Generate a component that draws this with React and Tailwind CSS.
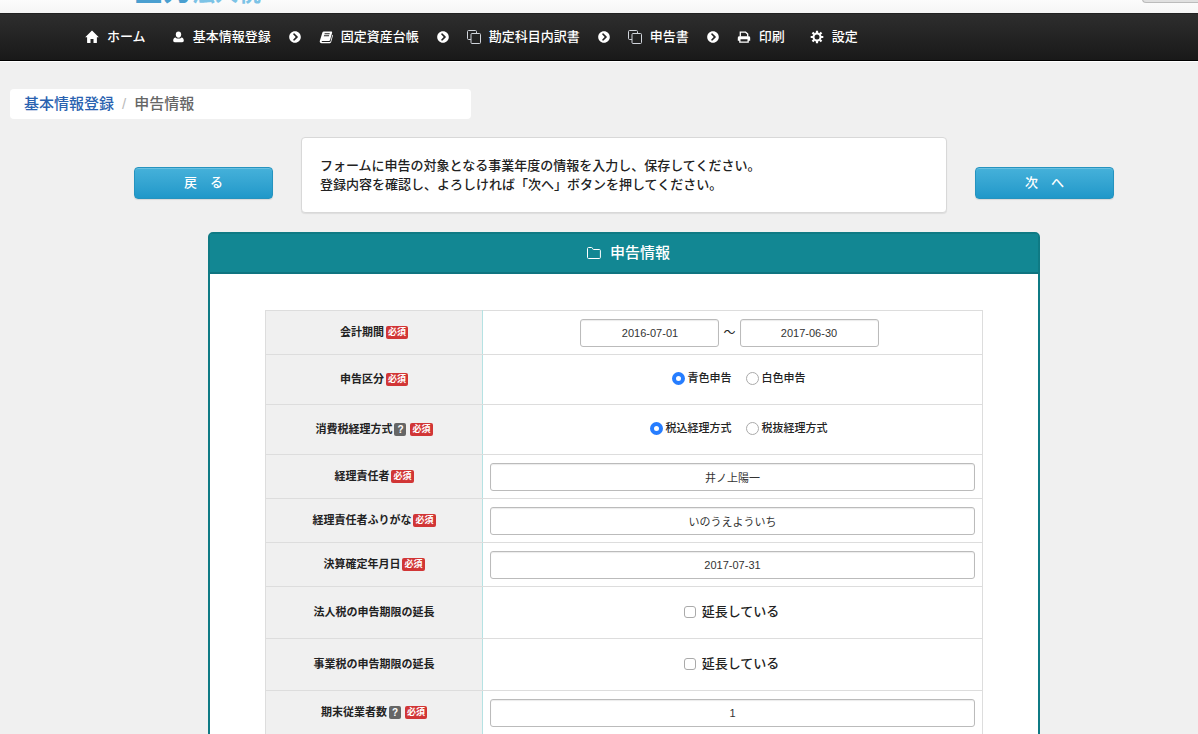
import { useState } from 'react'
import { FaChevronCircleRight } from 'react-icons/fa'

function HomeIcon() {
  return (
    <svg viewBox="0 0 14 14" className="w-[14px] h-[14px]" fill="currentColor">
      <path d="M7 .5l6.800 6.800h-1.900v5.200c0 .4-.2.6-.6.6H8.500V9.100h-3v4H2.700c-.4 0-.6-.2-.6-.6V7.300H.2z" />
    </svg>
  )
}

function UserIcon() {
  return (
    <svg viewBox="0 0 14 14" className="w-[14px] h-[14px]" fill="currentColor">
      <ellipse cx="7.5" cy="4.600" rx="2.700" ry="3.100" />
      <path d="M4.600 7.400C5.900 9 9.100 9 10.400 7.400c1.700.2 2.400 1.400 2.400 3.200 0 1.200-.6 1.700-1.600 1.700H3.800c-1 0-1.600-.5-1.600-1.700 0-1.800.7-3 2.400-3.200z" />
    </svg>
  )
}

function BookIcon() {
  return (
    <svg viewBox="0 0 14 14" className="w-[14px] h-[14px]" fill="currentColor">
      <path
        fillRule="evenodd"
        d="M4.900 1.400h7.300c.8 0 1.100.6.9 1.300l-2 7.300c-.2.6-.6.9-1.200.9H3.200c-.8 0-.8 1 0 1h7.500c.5 0 .8-.2.9-.6l1.700-6.500c.6.3.7.7.5 1.300l-1.600 6c-.2.7-.7 1.100-1.400 1.100H2.600c-1.300 0-2.200-1-1.800-2.200l2.600-8.500c.2-.7.7-1.100 1.500-1.100zM5.700 3.200l-.3 1h5.100l.3-1zM5.100 5.300l-.3 1h5.100l.3-1z"
      />
    </svg>
  )
}

function CopyIcon() {
  return (
    <svg viewBox="0 0 14 14" className="w-[14px] h-[14px] text-gray-300" fill="none" stroke="currentColor" strokeWidth="1">
      <path d="M4 9.500H1.500c-.6 0-1-.4-1-1v-7c0-.6.4-1 1-1h7c.6 0 1 .4 1 1V3.500" />
      <rect x="4" y="3.500" width="9.500" height="10" rx="1" />
    </svg>
  )
}

function PrintIcon() {
  return (
    <svg viewBox="0 0 14 14" className="w-[14px] h-[14px]">
      <path d="M3.300 6.800V2.200h5.300l2.100 1.900v2.700" fill="none" stroke="currentColor" strokeWidth="1.300" />
      <path
        fill="currentColor"
        fillRule="evenodd"
        d="M2.300 6.300h9.400c.9 0 1.500.6 1.500 1.500v3h-1.400v1.900H2.200v-1.900H.8v-3c0-.9.6-1.500 1.500-1.500zM3.500 9.200v2.300h7V9.200z"
      />
    </svg>
  )
}

function GearIcon() {
  return (
    <svg viewBox="0 0 14 14" className="w-[14px] h-[14px]" fill="none" stroke="currentColor">
      <circle cx="7" cy="7" r="3.500" strokeWidth="2" />
      <path
        strokeWidth="2.200"
        d="M7 .7v2.300M7 11v2.300M.7 7H3M11 7h2.300M2.500 2.500l1.600 1.600M9.900 9.900l1.600 1.600M2.500 11.500l1.600-1.600M9.900 4.100l1.600-1.600"
      />
    </svg>
  )
}

function FolderIcon() {
  return (
    <svg viewBox="0 0 16 14" className="w-4 h-[14px]" fill="none" stroke="currentColor" strokeWidth="1">
      <path d="M1.500 11.500V2.500c0-.6.400-1 1-1h3c.5 0 .9.300 1 .8.100.7.400 1.200 1 1.200h5.900c.6 0 1 .4 1 1v7c0 .6-.4 1-1 1H2.500c-.6 0-1-.4-1-1z" />
    </svg>
  )
}

const navItems = [
  { label: 'ホーム', icon: <HomeIcon /> },
  { label: '基本情報登録', icon: <UserIcon />, arrow: true },
  { label: '固定資産台帳', icon: <BookIcon />, arrow: true },
  { label: '勘定科目内訳書', icon: <CopyIcon />, arrow: true },
  { label: '申告書', icon: <CopyIcon />, arrow: true },
  { label: '印刷', icon: <PrintIcon /> },
  { label: '設定', icon: <GearIcon /> },
]

const inputClass =
  'h-7 px-2 bg-white border border-[#bbb] rounded-[3px] text-center text-[11px] text-[#333] shadow-[inset_0_1px_1px_rgba(0,0,0,0.08)]'

function ActionButton({ children }) {
  return (
    <button
      type="button"
      className="w-[139px] h-8 mb-[14px] shrink-0 rounded-[4px] border border-[#2593bf] bg-gradient-to-b from-[#45b1da] to-[#1f98c9] text-white text-[13px] font-medium whitespace-pre shadow-[inset_0_1px_0_rgba(255,255,255,0.2),0_1px_1px_rgba(0,0,0,0.1)]"
    >
      {children}
    </button>
  )
}

function Row({ label, htmlFor, help, required, height, children }) {
  return (
    <tr className={height}>
      <th scope="row" className="w-[217px] bg-[#f0f0f0] border border-[#ddd] border-r-[#b5e2e3] text-[11px] font-bold">
        <div className="flex items-center justify-center">
          <label htmlFor={htmlFor}>{label}</label>
          {help && (
            <span className="mx-0.5 w-3 h-[13px] rounded-[2px] bg-[#666] text-white text-[10px] leading-[13px]">?</span>
          )}
          {required && (
            <span className="ml-0.5 px-0.5 h-[13px] rounded-[2px] bg-[#d13636] text-white text-[9px] leading-[13px]">必須</span>
          )}
        </div>
      </th>
      <td className="border border-[#ddd] px-[7px]">{children}</td>
    </tr>
  )
}

function RadioGroup({ name, options, value, onChange }) {
  return (
    <div className="flex items-center justify-center gap-[14px] pl-3 pb-0.5">
      {options.map((option) => (
        <label key={option} className="flex items-center gap-[3px] text-[11px] font-medium">
          <input
            type="radio"
            name={name}
            checked={value === option}
            onChange={() => onChange(option)}
            className="appearance-none w-[13px] h-[13px] rounded-full bg-white border border-[#aaa] checked:border-4 checked:border-[#267dff]"
          />
          {option}
        </label>
      ))}
    </div>
  )
}

function ExtendCheckbox({ id }) {
  return (
    <div className="flex items-center justify-center gap-1.5 pr-0.5 pb-0.5 text-[13px] font-medium">
      <input
        id={id}
        type="checkbox"
        className="appearance-none w-3 h-3 rounded-[3px] bg-white border border-[#aaa] checked:bg-[#267dff]"
      />
      <label htmlFor={id}>延長している</label>
    </div>
  )
}

export default function App() {
  const [shinkoku, setShinkoku] = useState('青色申告')
  const [keiri, setKeiri] = useState('税込経理方式')

  return (
    <div className="min-h-screen bg-[#f0f0f0] text-[#222] font-['Liberation_Sans','Noto_Sans_CJK_JP',sans-serif]">
      <header className="h-[13px] overflow-hidden bg-gradient-to-b from-[#fcfcfc] to-[#f5f5f5] flex justify-between items-end pl-[134px]">
        <a href="#" className="flex items-baseline mb-[7px] font-bold leading-none text-[#4a9fd0]">
          <span className="text-[29px]">全力</span>
          <span className="text-[23px] text-[#7cc3e6]">法人税</span>
        </a>
        <button type="button" aria-label="メニュー" className="w-[56px] h-8 mb-[10px] rounded-bl-[4px] border border-r-0 border-[#bbb] bg-[#e0e0e0]" />
      </header>

      <nav className="h-12 pl-[85px] flex items-center bg-gradient-to-b from-[#2e2e2e] to-[#191919] border-t border-b border-t-[#222] border-b-black text-white text-[13px] font-medium shadow-[0_1px_0_#fff]">
        {navItems.map((item) => (
          <div key={item.label} className="flex items-center shrink-0">
            <a href="#" className="flex items-center gap-2">
              {item.icon}
              {item.label}
            </a>
            {item.arrow ? <FaChevronCircleRight className="w-3 h-3 mx-[18px]" /> : <span className="w-[25px]" />}
          </div>
        ))}
      </nav>

      <div className="pt-7 pl-[10px] w-5/12 pr-7">
        <ol className="h-[30px] px-[14px] rounded-[4px] bg-white flex items-center gap-2 text-[15px] font-medium">
          <li>
            <a href="#" className="text-[#2a62b0]">基本情報登録</a>
          </li>
          <li className="text-[#bbb]">/</li>
          <li className="text-[#666]">申告情報</li>
        </ol>
      </div>

      <main className="pl-[134px] pr-[84px] pt-[18px]">
        <div className="flex items-end gap-7 mb-[19px]">
          <ActionButton>戻　る</ActionButton>
          <div className="flex-1 px-[18px] py-[18px] bg-white border border-[#d8d8d8] rounded-[4px] shadow-[0_1px_1px_rgba(0,0,0,0.08)] text-[13px] leading-[19px] font-medium">
            <p>フォームに申告の対象となる事業年度の情報を入力し、保存してください。</p>
            <p>登録内容を確認し、よろしければ「次へ」ボタンを押してください。</p>
          </div>
          <ActionButton>次　へ</ActionButton>
        </div>

        <section className="mx-[74px] border-2 border-[#0f7a84] rounded-t-[5px] bg-white">
          <h1 className="h-10 pl-2 flex items-center justify-center gap-2 bg-[#128793] border-b-2 border-[#0f7480] text-white text-[15px] font-medium">
            <FolderIcon />
            申告情報
          </h1>
          <form className="px-[55px] pt-9 pb-10">
            <table className="w-full table-fixed border-collapse">
              <tbody>
                <Row label="会計期間" htmlFor="period-start" required height="h-11">
                  <div className="flex items-center justify-center gap-1 pr-1.5 text-[12px]">
                    <input id="period-start" type="text" defaultValue="2016-07-01" className={`w-[139px] ${inputClass}`} />
                    〜
                    <input aria-label="会計期間の終了日" type="text" defaultValue="2017-06-30" className={`w-[139px] ${inputClass}`} />
                  </div>
                </Row>
                <Row label="申告区分" required height="h-[50px]">
                  <RadioGroup name="shinkoku" options={['青色申告', '白色申告']} value={shinkoku} onChange={setShinkoku} />
                </Row>
                <Row label="消費税経理方式" help required height="h-[50px]">
                  <RadioGroup name="keiri" options={['税込経理方式', '税抜経理方式']} value={keiri} onChange={setKeiri} />
                </Row>
                <Row label="経理責任者" htmlFor="manager" required height="h-11">
                  <input id="manager" type="text" defaultValue="井ノ上陽一" className={`block w-full ${inputClass}`} />
                </Row>
                <Row label="経理責任者ふりがな" htmlFor="manager-kana" required height="h-11">
                  <input id="manager-kana" type="text" defaultValue="いのうえよういち" className={`block w-full ${inputClass}`} />
                </Row>
                <Row label="決算確定年月日" htmlFor="settled-on" required height="h-11">
                  <input id="settled-on" type="text" defaultValue="2017-07-31" className={`block w-full ${inputClass}`} />
                </Row>
                <Row label="法人税の申告期限の延長" htmlFor="extend-corporate" height="h-[52px]">
                  <ExtendCheckbox id="extend-corporate" />
                </Row>
                <Row label="事業税の申告期限の延長" htmlFor="extend-business" height="h-[52px]">
                  <ExtendCheckbox id="extend-business" />
                </Row>
                <Row label="期末従業者数" htmlFor="employees" help required height="h-11">
                  <input id="employees" type="text" defaultValue="1" className={`block w-full ${inputClass}`} />
                </Row>
              </tbody>
            </table>
          </form>
        </section>
      </main>
    </div>
  )
}
